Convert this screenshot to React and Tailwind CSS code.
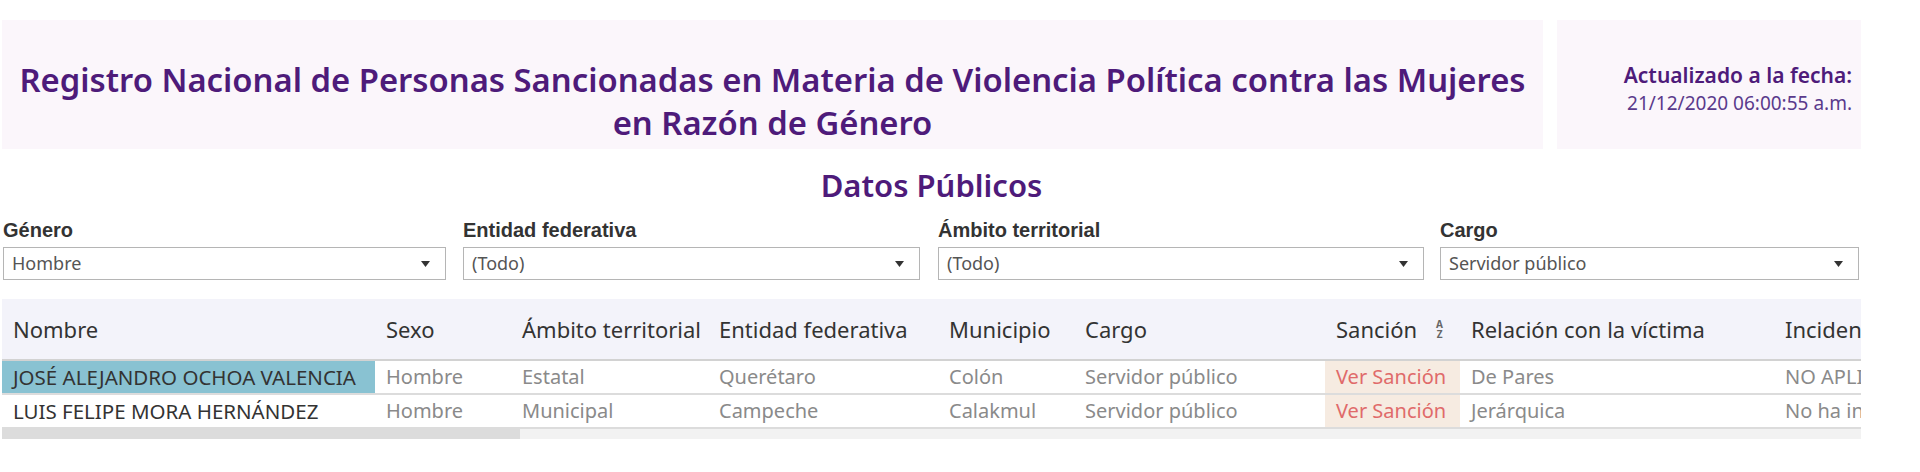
import React from "react";

const cols = [
  { key: "nombre", label: "Nombre", w: "w-[373px]" },
  { key: "sexo", label: "Sexo", w: "w-[136px]" },
  { key: "ambito", label: "Ámbito territorial", w: "w-[197px]" },
  { key: "entidad", label: "Entidad federativa", w: "w-[230px]" },
  { key: "municipio", label: "Municipio", w: "w-[136px]" },
  { key: "cargo", label: "Cargo", w: "w-[251px]" },
  { key: "sancion", label: "Sanción", w: "w-[135px]" },
  { key: "relacion", label: "Relación con la víctima", w: "w-[314px]" },
  { key: "incidencia", label: "Incidencia", w: "w-[300px]" },
];

const rows = [
  {
    nombre: "JOSÉ ALEJANDRO OCHOA VALENCIA",
    sexo: "Hombre",
    ambito: "Estatal",
    entidad: "Querétaro",
    municipio: "Colón",
    cargo: "Servidor público",
    sancion: "Ver Sanción",
    relacion: "De Pares",
    incidencia: "NO APLICA",
    highlight: true,
  },
  {
    nombre: "LUIS FELIPE MORA HERNÁNDEZ",
    sexo: "Hombre",
    ambito: "Municipal",
    entidad: "Campeche",
    municipio: "Calakmul",
    cargo: "Servidor público",
    sancion: "Ver Sanción",
    relacion: "Jerárquica",
    incidencia: "No ha informado",
  },
];

function Arrow() {
  return (
    <svg width="9" height="6" viewBox="0 0 9 6" className="shrink-0">
      <polygon points="0,0 9,0 4.5,6" fill="#333333" />
    </svg>
  );
}

function Filter({ label, value, className }) {
  return (
    <div className={className}>
      <div className="h-[22px] leading-[22px] text-[20px] font-bold text-[#333333] font-['Liberation_Sans',Arial,sans-serif] whitespace-nowrap">
        {label}
      </div>
      <div className="mt-[6px] h-[33px] border border-[#b5b5b5] bg-white flex items-center justify-between pl-[8px] pr-[15px]">
        <span className="text-[18px] text-[#555555] font-['Noto_Sans',sans-serif] whitespace-nowrap">
          {value}
        </span>
        <Arrow />
      </div>
    </div>
  );
}

export default function App() {
  return (
    <div className="w-[1920px] h-[472px] bg-white overflow-hidden font-['Noto_Sans',sans-serif]">
      <div className="pl-[2px] pt-[20px] w-[1861px]">
        {/* Header */}
        <div className="flex h-[129px] gap-[14px]">
          <div className="w-[1541px] bg-[#fbf6fb] flex items-start justify-center text-center pt-[38px]">
            <h1 className="text-[32.8px] leading-[43px] font-semibold text-[#4e1b7a]">
              Registro Nacional de Personas Sancionadas en Materia de Violencia Política contra las Mujeres
              <br />
              en Razón de Género
            </h1>
          </div>
          <div className="flex-1 bg-[#fbf6fb] flex flex-col items-end pt-[41px] pr-[9px]">
            <div className="text-[21px] leading-[28px] font-semibold text-[#4e1b7a] whitespace-nowrap">
              Actualizado a la fecha:
            </div>
            <div className="text-[19px] leading-[28px] text-[#5a3a8c] whitespace-nowrap">
              21/12/2020 06:00:55 a.m.
            </div>
          </div>
        </div>

        {/* Subtitle */}
        <div className="mt-[17px] h-[38px] leading-[38px] text-center text-[31px] font-semibold text-[#4e1b7a]">
          Datos Públicos
        </div>

        {/* Filters */}
        <div className="flex mt-[15px]">
          <Filter className="ml-[1px] w-[443px]" label="Género" value="Hombre" />
          <Filter className="ml-[17px] w-[457px]" label="Entidad federativa" value="(Todo)" />
          <Filter className="ml-[18px] w-[486px]" label="Ámbito territorial" value="(Todo)" />
          <Filter className="ml-[16px] w-[419px]" label="Cargo" value="Servidor público" />
        </div>

        {/* Table */}
        <div className="mt-[19px] w-[1859px] overflow-hidden">
          <div className="flex h-[62px] bg-[#f3f3fa] border-b-2 border-[#d2d2d2] w-max">
            {cols.map((c) => (
              <div
                key={c.key}
                className={`${c.w} shrink-0 flex items-center pl-[11px] text-[22px] text-[#333333] whitespace-nowrap`}
              >
                {c.label}
                {c.key === "sancion" && (
                  <span className="ml-auto mr-[17px] flex flex-col items-center text-[10px] leading-[10px] font-bold text-[#666666]">
                    <span>A</span>
                    <span>Z</span>
                  </span>
                )}
              </div>
            ))}
          </div>
          {rows.map((r, i) => (
            <div key={i} className="flex h-[34px] border-b-2 border-[#dcdcdc] w-max">
              {cols.map((c) => {
                let cls = "text-[#8a8a8a] text-[20px]";
                let bg = "";
                if (c.key === "nombre") {
                  cls = "text-[#333333] text-[20.5px]";
                  if (r.highlight) bg = "bg-[#89c2d2]";
                }
                if (c.key === "sancion") {
                  cls = "text-[#e06a6a] text-[20px]";
                  bg = "bg-[#f6ebe1]";
                }
                return (
                  <div
                    key={c.key}
                    className={`${c.w} ${bg} ${cls} shrink-0 flex items-center pl-[11px] whitespace-nowrap overflow-hidden`}
                  >
                    {r[c.key]}
                  </div>
                );
              })}
            </div>
          ))}
          <div className="h-[10px] bg-[#f2f2f2] flex">
            <div className="w-[518px] h-full bg-[#dcdcdc]" />
          </div>
        </div>
      </div>
    </div>
  );
}
